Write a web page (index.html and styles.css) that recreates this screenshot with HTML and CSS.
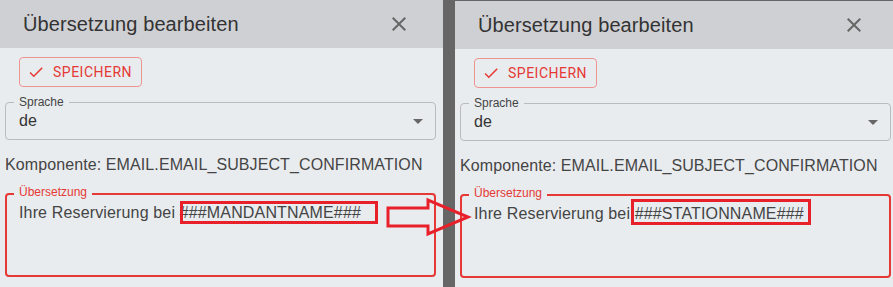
FILE: index.html
```html
<!DOCTYPE html>
<html lang="de">

<head>
    <meta charset="UTF-8">
    <meta name="viewport" content="width=device-width, initial-scale=1.0">
    <title>Übersetzung bearbeiten</title>
    <link rel="stylesheet" href="styles.css">
</head>

<body>
    <div class="compare">
        <!-- Vorher -->
        <div class="dialog">
            <header class="dialog-header">
                <h2>Übersetzung bearbeiten</h2>
                <svg class="close" viewBox="0 0 24 24"><path d="M19 6.41L17.59 5 12 10.59 6.41 5 5 6.41 10.59 12 5 17.59 6.41 19 12 13.41 17.59 19 19 17.59 13.41 12z"/></svg>
            </header>
            <div class="dialog-content">
                <button type="button" class="save">
                    <svg viewBox="0 0 24 24"><path d="M9 16.17L4.83 12l-1.42 1.41L9 19 21 7l-1.41-1.41z"/></svg>
                    Speichern
                </button>
                <div class="select">
                    <span class="float-label">Sprache</span>
                    <span class="value">de</span>
                    <svg class="caret" viewBox="0 0 24 24"><path d="M7 10l5 5 5-5z"/></svg>
                </div>
                <p class="component">Komponente: EMAIL.EMAIL_SUBJECT_CONFIRMATION</p>
                <div class="field">
                    <span class="float-label">Übersetzung</span>
                    <p class="value">Ihre Reservierung bei ###MANDANTNAME###</p>
                    <span class="mark mark-old"></span>
                </div>
            </div>
        </div>

        <!-- Nachher -->
        <div class="dialog dialog-after">
            <header class="dialog-header">
                <h2>Übersetzung bearbeiten</h2>
                <svg class="close" viewBox="0 0 24 24"><path d="M19 6.41L17.59 5 12 10.59 6.41 5 5 6.41 10.59 12 5 17.59 6.41 19 12 13.41 17.59 19 19 17.59 13.41 12z"/></svg>
            </header>
            <div class="dialog-content">
                <button type="button" class="save">
                    <svg viewBox="0 0 24 24"><path d="M9 16.17L4.83 12l-1.42 1.41L9 19 21 7l-1.41-1.41z"/></svg>
                    Speichern
                </button>
                <div class="select">
                    <span class="float-label">Sprache</span>
                    <span class="value">de</span>
                    <svg class="caret" viewBox="0 0 24 24"><path d="M7 10l5 5 5-5z"/></svg>
                </div>
                <p class="component">Komponente: EMAIL.EMAIL_SUBJECT_CONFIRMATION</p>
                <div class="field">
                    <span class="float-label">Übersetzung</span>
                    <p class="value">Ihre Reservierung bei ###STATIONNAME###</p>
                    <span class="mark mark-new"></span>
                </div>
            </div>
        </div>
    </div>

    <!-- Pfeil zwischen den beiden Dialogen -->
    <svg class="arrow" viewBox="0 0 100 60" width="100" height="60">
        <polygon points="8,18 48,18 48,10 88,27 48,44 48,36 8,36" />
    </svg>
</body>

</html>
```

FILE: styles.css
```css
/* Reset */
body, h2, p {
    margin: 0;
    padding: 0;
}

body {
    font-family: 'Liberation Sans', Arial, sans-serif;
    background-color: #666;
    color: #444;
    height: 287px;
    overflow: hidden;
    position: relative;
}

.compare {
    display: flex;
    gap: 12px;
    height: 100%;
}

/* Dialog */
.dialog {
    flex: 0 0 443px;
    background-color: #e9ecef;
    display: flex;
    flex-direction: column;
}

.dialog-after {
    margin-top: 1px;
}

.dialog-header {
    height: 48px;
    background-color: #cfd0d3;
    display: flex;
    align-items: center;
    justify-content: space-between;
    padding: 0 32px 0 23px;
}

.dialog-header h2 {
    font-size: 20px;
    font-weight: 400;
    letter-spacing: 0.1px;
    color: #333;
    line-height: 48px;
}

.close {
    width: 24px;
    height: 24px;
    fill: #666;
}

.dialog-content {
    padding: 0 7px 0 5px;
    display: flex;
    flex-direction: column;
    align-items: flex-start;
}

/* Save button */
.save {
    margin: 9px 0 0 14px;
    height: 30px;
    display: flex;
    align-items: center;
    gap: 8px;
    padding: 0 9px 0 7px;
    background: transparent;
    border: 1px solid #f09492;
    border-radius: 4px;
    color: #e53935;
    font-family: 'Roboto', sans-serif;
    font-size: 14px;
    letter-spacing: 0.5px;
    text-transform: uppercase;
}

.save svg {
    width: 18px;
    height: 18px;
    fill: #e53935;
}

/* Outlined inputs */
.select,
.field {
    position: relative;
    width: 431px;
    box-sizing: border-box;
    border-radius: 4px;
}

.float-label {
    position: absolute;
    font-size: 12px;
    line-height: 12px;
    padding: 0 5px;
    background-color: #e9ecef;
}

.select {
    margin-top: 15px;
    height: 38px;
    border: 1px solid #b9bbbd;
    display: flex;
    align-items: center;
    padding: 0 5px 0 13px;
}

.select .float-label {
    top: -7px;
    left: 8px;
    color: #444;
}

.select .value {
    flex: 1;
    font-size: 16px;
    color: #333;
}

.caret {
    width: 24px;
    height: 24px;
    fill: #666;
}

.component {
    margin-top: 13px;
    font-size: 16px;
    line-height: 24px;
    letter-spacing: 0.1px;
}

.field {
    margin-top: 16px;
    height: 84px;
    border: 2px solid #e53935;
    padding: 6px 12px 0;
}

.field .float-label {
    top: -9px;
    left: 7px;
    color: #e53935;
}

.field .value {
    font-size: 16px;
    line-height: 24px;
    letter-spacing: 0.15px;
    color: #444;
}

/* Markierungen */
.mark {
    position: absolute;
    box-sizing: border-box;
    border: 3px solid #e8202a;
}

.mark-old {
    left: 173px;
    top: 6px;
    width: 198px;
    height: 23px;
}

.mark-new {
    left: 169px;
    top: 3px;
    width: 180px;
    height: 26px;
}

.arrow {
    position: absolute;
    left: 380px;
    top: 190px;
}

.arrow polygon {
    fill: none;
    stroke: #e8202a;
    stroke-width: 3;
}
```
